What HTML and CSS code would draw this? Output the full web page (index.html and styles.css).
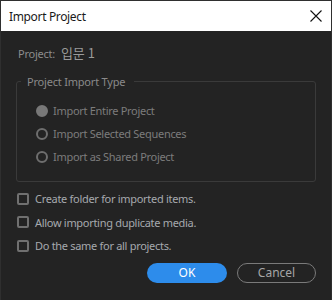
FILE: index.html
```html
<!DOCTYPE html>
<html>
<head>
<meta charset="utf-8">
<link rel="stylesheet" href="styles.css">
</head>
<body>
<div class="window">
  <div class="titlebar">
    <span class="title">Import Project</span>
    <svg class="close" width="12" height="12" viewBox="0 0 12 12"><path d="M0.5 0.5L11.5 11.5M11.5 0.5L0.5 11.5" stroke="#111" stroke-width="1.1" fill="none"/></svg>
  </div>
  <div class="body">
    <div class="project"><span class="plabel">Project:</span><span class="pname">입문 1</span></div>
    <fieldset class="group">
      <legend>Project Import Type</legend>
      <div class="radios">
        <div class="radio"><span class="dot on"></span><span>Import Entire Project</span></div>
        <div class="radio"><span class="dot"></span><span>Import Selected Sequences</span></div>
        <div class="radio"><span class="dot"></span><span>Import as Shared Project</span></div>
      </div>
    </fieldset>
    <div class="checks">
      <div class="check"><span class="box"></span><span>Create folder for imported items.</span></div>
      <div class="check"><span class="box"></span><span>Allow importing duplicate media.</span></div>
      <div class="check"><span class="box"></span><span>Do the same for all projects.</span></div>
    </div>
    <div class="buttons">
      <button class="btn ok">OK</button>
      <button class="btn cancel">Cancel</button>
    </div>
  </div>
</div>
</body>
</html>
```
FILE: styles.css
```css
html, body { margin: 0; padding: 0; background: #232323; }
body { width: 332px; height: 300px; overflow: hidden; font-family: "Noto Sans", "Noto Sans CJK KR", sans-serif; }
.window { width: 332px; height: 300px; box-sizing: border-box; border: 1px solid #2f2f2f; border-bottom: none; background: #232323; display: flex; flex-direction: column; }
.titlebar { height: 30px; background: #fff; display: flex; align-items: center; justify-content: space-between; padding: 0 9px 0 8px; flex: none; }
.title { font-size: 12px; letter-spacing: -0.35px; color: #1a1a1a; font-family: "Noto Sans", sans-serif; }
.body { padding: 12px 15px 0 15px; display: flex; flex-direction: column; }
.project { font-size: 11px; letter-spacing: -0.25px; color: #8c8c8c; display: flex; align-items: baseline; gap: 6px; height: 18px; padding-left: 2px; }
.pname { font-size: 13px; letter-spacing: 0; color: #9a9a9a; font-family: "Noto Sans CJK KR", sans-serif; }
.group { margin: 13px 0 0 0; padding: 0; border: 1px solid #3a3a3a; border-radius: 3px; width: 300px; box-sizing: border-box; height: 108px; }
.group legend { font-size: 11px; letter-spacing: -0.2px; color: #8a8a8a; padding: 0 9px 0 6px; margin-left: 4px; }
.radios { padding: 10px 0 0 19px; display: flex; flex-direction: column; }
.radio { display: flex; align-items: center; gap: 5px; height: 23px; font-size: 11px; letter-spacing: -0.3px; color: #7c7c7c; }
.dot { width: 8px; height: 8px; border: 2px solid #6e6e6e; border-radius: 50%; flex: none; }
.dot.on { background: #787878; border-color: #787878; }
.checks { margin-top: 5px; display: flex; flex-direction: column; }
.check { display: flex; align-items: center; gap: 6px; height: 23.5px; font-size: 11px; letter-spacing: -0.3px; color: #a6a9ae; padding-left: 1px; }
.box { width: 8px; height: 8px; border: 2px solid #707070; border-radius: 2px; flex: none; }
.buttons { display: flex; justify-content: flex-end; gap: 10px; margin-top: 5px; padding-right: 0; }
.btn { height: 20px; border-radius: 10px; font-family: "Noto Sans", sans-serif; font-size: 12px; padding: 0; box-sizing: border-box; }
.ok { width: 80px; background: #2d8ceb; color: #fff; border: none; }
.cancel { width: 79px; background: transparent; color: #a6a6a6; border: 1px solid #7a7a7a; }
```
